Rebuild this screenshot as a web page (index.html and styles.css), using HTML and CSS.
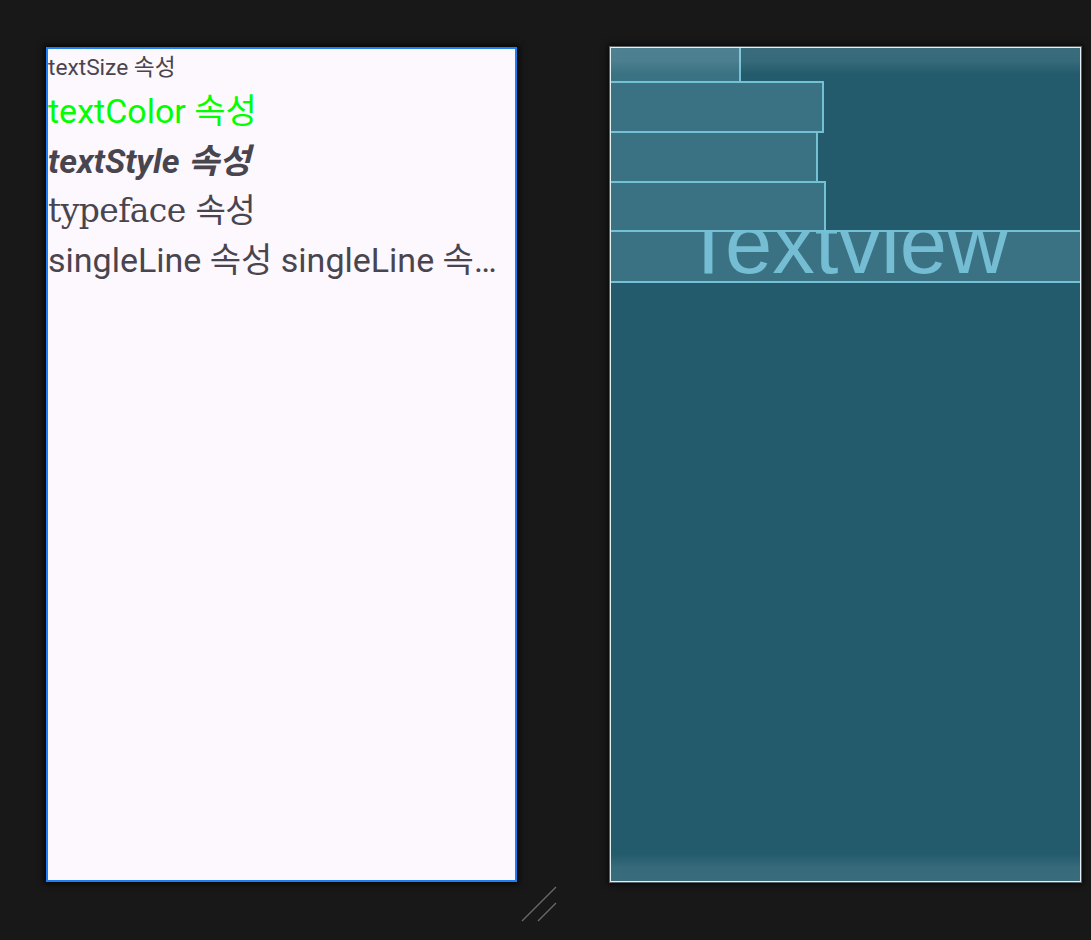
FILE: index.html
```html
<!DOCTYPE html>
<html lang="ko">
<head>
<meta charset="utf-8">
<title>Layout preview</title>
<link rel="stylesheet" href="styles.css">
</head>
<body>
<div class="stage">
  <div class="device design">
    <div class="tv tv-size">textSize 속성</div>
    <div class="tv tv-color">textColor 속성</div>
    <div class="tv tv-style">textStyle 속성</div>
    <div class="tv tv-face">typeface 속성</div>
    <div class="tv tv-single">singleLine 속성 singleLine 속성 singleLine 속성</div>
  </div>
  <div class="device blueprint">
    <div class="bp bp1"></div>
    <div class="bp bp2"></div>
    <div class="bp bp3"></div>
    <div class="bp bp4"></div>
    <div class="bp bp5"><span class="bp-label">Textview</span></div>
  </div>
  <svg class="resize" width="40" height="40" viewBox="0 0 40 40">
    <line x1="2" y1="35" x2="36" y2="1" stroke="#6b6b6b" stroke-width="1.3"/>
    <line x1="18" y1="35" x2="36" y2="17" stroke="#6b6b6b" stroke-width="1.3"/>
  </svg>
</div>
</body>
</html>
```
FILE: styles.css
```css
html, body {
  margin: 0;
  padding: 0;
  background: #181818;
}
.stage {
  position: relative;
  width: 1091px;
  height: 940px;
  box-sizing: border-box;
  padding: 47px 0 0 46px;
  display: flex;
  gap: 93px;
  align-items: flex-start;
  overflow: hidden;
}
.device {
  width: 471px;
  height: 835px;
  box-sizing: border-box;
  flex: none;
  box-shadow: 0 0 6px 2px rgba(0,0,0,0.75);
}
.design {
  background: #fdf7fe;
  border: 2px solid #1f7ff2;
  display: flex;
  flex-direction: column;
  font-family: Roboto, "Noto Sans CJK KR", sans-serif;
  color: #49454f;
}
.tv {
  white-space: nowrap;
  overflow: hidden;
  text-overflow: ellipsis;
  box-sizing: border-box;
}
.tv-size {
  font-size: 22.7px;
  height: 34px;
  line-height: 34px;
  padding-top: 2px;
}
.tv-color {
  font-size: 34px;
  height: 50px;
  line-height: 50px;
  padding-top: 3px;
  color: #00ff00;
  overflow: visible;
}
.tv-style {
  font-size: 34px;
  height: 50px;
  line-height: 50px;
  padding-top: 3px;
  font-weight: bold;
  font-style: italic;
  overflow: visible;
}
.tv-face {
  font-family: "DejaVu Serif", "Noto Sans CJK KR", serif;
  font-size: 33px;
  letter-spacing: -0.6px;
  height: 49px;
  line-height: 49px;
  padding-top: 3px;
  overflow: visible;
}
.tv-single {
  font-size: 34px;
  height: 51px;
  line-height: 51px;
  padding-top: 3px;
  width: 458px;
}
.blueprint {
  position: relative;
  background: #235b6d;
  border: 1px solid #e2f0f2;
  box-shadow: 0 0 0 1px rgba(190,200,205,0.45), 0 0 6px 2px rgba(0,0,0,0.75);
  display: flex;
  flex-direction: column;
  overflow: hidden;
}
.blueprint::before,
.blueprint::after {
  content: "";
  position: absolute;
  left: 0;
  right: 0;
  height: 27px;
  pointer-events: none;
  z-index: 3;
}
.blueprint::before {
  top: 0;
  background: linear-gradient(rgba(255,255,255,0.1) 0, rgba(255,255,255,0.09) 13px, rgba(255,255,255,0) 26px);
}
.blueprint::after {
  bottom: 0;
  background: linear-gradient(rgba(255,255,255,0) 0, rgba(255,255,255,0.09) 13px, rgba(255,255,255,0.1) 27px);
}
.bp {
  background: #3a7284;
  border: 2px solid #74c0d5;
  border-left: none;
  box-sizing: border-box;
  margin-top: -2px;
}
.bp1 { width: 130px; height: 35px; border-top: none; margin-top: 0; }
.bp2 { width: 213px; height: 52px; }
.bp3 { width: 207px; height: 52px; }
.bp4 { width: 215px; height: 51px; }
.bp5 {
  width: 100%;
  height: 53px;
  position: relative;
  border-right: none;
  overflow: hidden;
}
.bp-label {
  position: absolute;
  left: 0;
  right: 0;
  top: -31px;
  text-align: center;
  font-family: "Liberation Sans", Arial, sans-serif;
  font-size: 85px;
  line-height: 85px;
  color: #74bdd3;
  white-space: nowrap;
}
.resize {
  position: absolute;
  left: 520px;
  top: 886px;
}
```
